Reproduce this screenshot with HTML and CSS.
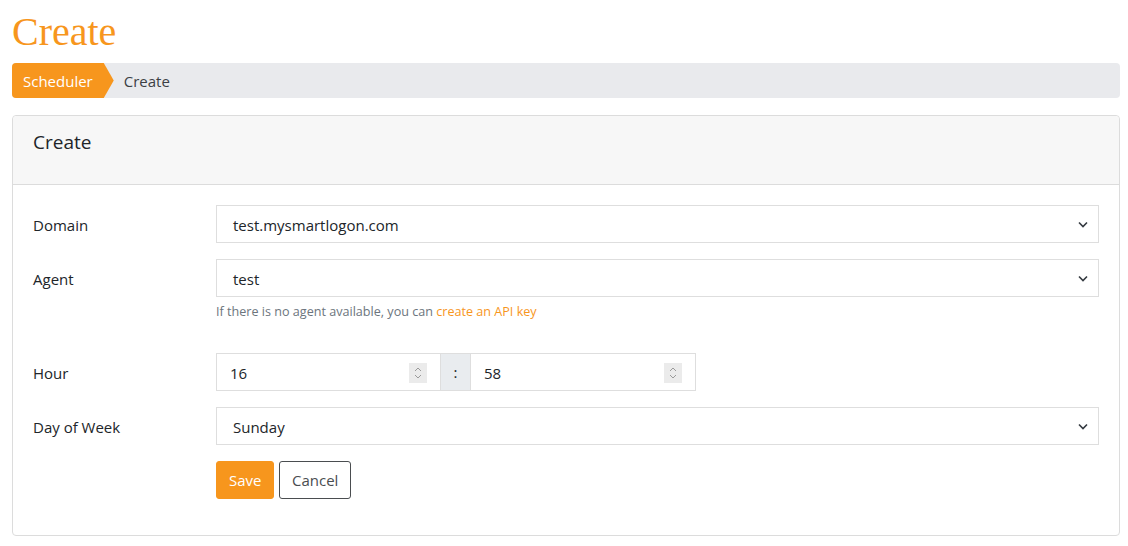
FILE: index.html
```html
<!DOCTYPE html>
<html>
<head>
<meta charset="utf-8">
<link rel="stylesheet" href="styles.css">
</head>
<body>
<h1 class="title">Create</h1>
<nav class="crumbs">
  <span class="crumb-active">Scheduler</span>
  <span class="crumb">Create</span>
</nav>
<section class="card">
  <header class="card-head">Create</header>
  <div class="card-body">
    <div class="row">
      <label class="lbl">Domain</label>
      <div class="ctl">
        <div class="select"><span>test.mysmartlogon.com</span><svg class="chev" width="10" height="7" viewBox="0 0 10 7"><path d="M1 1.5l4 4 4-4" fill="none" stroke="#343a40" stroke-width="1.6"/></svg></div>
      </div>
    </div>
    <div class="row">
      <label class="lbl">Agent</label>
      <div class="ctl">
        <div class="select"><span>test</span><svg class="chev" width="10" height="7" viewBox="0 0 10 7"><path d="M1 1.5l4 4 4-4" fill="none" stroke="#343a40" stroke-width="1.6"/></svg></div>
        <div class="help">If there is no agent available, you can <a href="#">create an API key</a></div>
      </div>
    </div>
    <div class="row row-hour">
      <label class="lbl">Hour</label>
      <div class="ctl">
        <div class="time">
          <div class="num"><span>16</span><span class="spin"><svg width="8" height="14" viewBox="0 0 8 14"><path d="M1 5l3-3 3 3M1 9l3 3 3-3" fill="none" stroke="#9a9a9a" stroke-width="1"/></svg></span></div>
          <div class="colon">:</div>
          <div class="num num-r"><span>58</span><span class="spin"><svg width="8" height="14" viewBox="0 0 8 14"><path d="M1 5l3-3 3 3M1 9l3 3 3-3" fill="none" stroke="#9a9a9a" stroke-width="1"/></svg></span></div>
        </div>
      </div>
    </div>
    <div class="row">
      <label class="lbl">Day of Week</label>
      <div class="ctl">
        <div class="select"><span>Sunday</span><svg class="chev" width="10" height="7" viewBox="0 0 10 7"><path d="M1 1.5l4 4 4-4" fill="none" stroke="#343a40" stroke-width="1.6"/></svg></div>
      </div>
    </div>
    <div class="row">
      <div class="lbl"></div>
      <div class="ctl buttons">
        <button class="btn btn-save">Save</button>
        <button class="btn btn-cancel">Cancel</button>
      </div>
    </div>
  </div>
</section>
</body>
</html>
```
FILE: styles.css
```css
* { box-sizing: border-box; }
body {
  margin: 0;
  padding: 0 8px 0 12px;
  font-family: "Open Sans", "Noto Sans", sans-serif;
  font-size: 15px;
  color: #212529;
  background: #fff;
}
.title {
  margin: 0;
  padding-top: 10px;
  height: 63px;
  font-family: "Liberation Serif", "Times New Roman", serif;
  font-weight: 400;
  font-size: 40px;
  line-height: 44px;
  color: #f7961d;
}
.crumbs {
  display: flex;
  align-items: center;
  height: 35px;
  background: #e9eaed;
  border-radius: 4px;
  overflow: hidden;
}
.crumb-active {
  height: 35px;
  display: flex;
  align-items: center;
  padding: 1px 21px 0 11px;
  background: #f7961d;
  color: #fff;
  clip-path: polygon(0 0, calc(100% - 10px) 0, 100% 50%, calc(100% - 10px) 100%, 0 100%);
}
.crumb {
  padding-left: 10px;
  padding-top: 1px;
  color: #3c3f44;
}
.card {
  margin-top: 17px;
  border: 1px solid #dcdcdc;
  border-radius: 4px;
  height: 421px;
}
.card-head {
  height: 69px;
  background: #f7f7f7;
  border-bottom: 1px solid #dcdcdc;
  border-radius: 4px 4px 0 0;
  padding: 13px 20px;
  font-size: 19px;
  line-height: 26px;
}
.card-body {
  padding: 20px 20px 20px 20px;
}
.row {
  display: flex;
  align-items: flex-start;
  margin-bottom: 16px;
}
.row-hour { margin-top: 33px; margin-bottom: 16px; }
.lbl {
  width: 183px;
  flex: none;
  height: 38px;
  line-height: 40px;
}
.ctl {
  flex: 1;
}
.select {
  height: 38px;
  border: 1px solid #dedede;
  display: flex;
  align-items: center;
  justify-content: space-between;
  padding: 1px 10px 0 16px;
  background: #fff;
}
.help {
  margin-top: 6px;
  font-size: 12.6px;
  color: #6c757d;
}
.help a { color: #f7961d; text-decoration: none; }
.time {
  display: flex;
  height: 38px;
  width: 480px;
}
.num {
  width: 225px;
  border: 1px solid #dedede;
  display: flex;
  align-items: center;
  justify-content: space-between;
  padding: 1px 13px 0 13px;
}
.num-r { width: 226px; }
.spin {
  width: 18px;
  height: 20px;
  background: #ebebeb;
  display: flex;
  align-items: center;
  justify-content: center;
}
.colon {
  width: 29px;
  background: #e9ecef;
  border-top: 1px solid #dedede;
  border-bottom: 1px solid #dedede;
  display: flex;
  align-items: center;
  justify-content: center;
}
.buttons {
  display: flex;
  gap: 5px;
}
.btn {
  height: 38px;
  font-family: inherit;
  font-size: 15px;
  border-radius: 3px;
  padding: 0 12px;
  cursor: pointer;
}
.btn-save {
  background: #f7961d;
  border: 1px solid #f7961d;
  color: #fff;
  width: 58px;
}
.btn-cancel {
  background: #fff;
  border: 1px solid #4a4d50;
  color: #4a4d50;
  width: 72px;
}
```
